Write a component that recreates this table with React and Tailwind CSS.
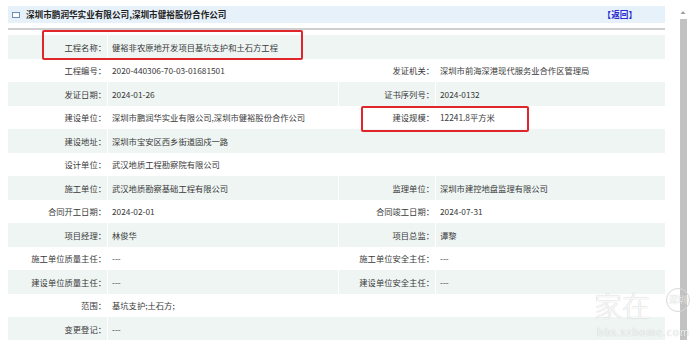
import React from 'react';

const rows = [
    ['工程名称', '健裕非农原地开发项目基坑支护和土石方工程'],
    ['工程编号', '2020-440306-70-03-01681501', '发证机关', '深圳市前海深港现代服务业合作区管理局'],
    ['发证日期', '2024-01-26', '证书序列号', '2024-0132'],
    ['建设单位', '深圳市鹏润华实业有限公司,深圳市健裕股份合作公司', '建设规模', '12241.8平方米'],
    ['建设地址', '深圳市宝安区西乡街道固戍一路'],
    ['设计单位', '武汉地质工程勘察院有限公司'],
    ['施工单位', '武汉地质勘察基础工程有限公司', '监理单位', '深圳市建控地盘监理有限公司'],
    ['合同开工日期', '2024-02-01', '合同竣工日期', '2024-07-31'],
    ['项目经理', '林俊华', '项目总监', '谭黎'],
    ['施工单位质量主任', '---', '施工单位安全主任', '---'],
    ['建设单位质量主任', '---', '建设单位安全主任', '---'],
    ['范围', '基坑支护;土石方;'],
    ['变更登记', '---'],
];

const App = () => {
    return (
        <div
            className="relative w-[700px] h-[340px] overflow-hidden bg-white text-[#3a3a3a] text-[8.3px]"
            style={{ fontFamily: '"Noto Sans CJK SC", "Noto Sans", sans-serif' }}
        >
            <div className="flex">
                {/* 主体 */}
                <div className="w-[672px] pl-[8px] pr-[7px] pt-[6px]">
                    <div className="h-[17px] bg-[#e6f1fa] flex items-center pl-[4px] pr-[28px]">
                        <span className="w-[8px] h-[6px] border border-[#6a8fb8] bg-white mr-[6px]"></span>
                        <span className="font-bold text-[8.6px] text-[#222]">深圳市鹏润华实业有限公司,深圳市健裕股份合作公司</span>
                        <span className="ml-auto font-bold text-[8.6px] text-[#2a2acf]">【返回】</span>
                    </div>
                    <div className="h-[2px] bg-[#cfcfcf] mt-[5px] mb-[5px]"></div>

                    {/* 表格 */}
                    <div>
                        {rows.map((r, i) => {
                            const bg = i % 2 === 0 ? 'bg-[#eef5f3]' : 'bg-white';
                            const full = r.length === 2;
                            return (
                                <div key={i} className="grid grid-cols-[99px_230px_96px_229px] gap-x-px h-[23.5px]">
                                    <div className={`${bg} flex items-center justify-end pr-[1px]`}>{r[0]}：</div>
                                    <div className={`${bg} flex items-center pl-[4px] ${full ? 'col-span-3' : ''}`}>{r[1]}</div>
                                    {!full && (
                                        <>
                                            <div className={`${bg} flex items-center justify-end pr-[1px]`}>{r[2]}：</div>
                                            <div className={`${bg} flex items-center pl-[4px]`}>{r[3]}</div>
                                        </>
                                    )}
                                </div>
                            );
                        })}
                    </div>
                </div>

                {/* 滚动条 */}
                <div className="w-[10px] ml-[6px] flex flex-col items-center pt-[10px]">
                    <svg width="6" height="5" viewBox="0 0 6 5">
                        <path d="M3 1 L5.5 4 L0.5 4 Z" fill="#a0a0a0" />
                    </svg>
                    <div className="w-[7px] h-[330px] bg-[#c2c2c2] mt-[4px]"></div>
                </div>
            </div>

            {/* 红框标注 */}
            <div className="absolute left-[42px] top-[30px] w-[261px] h-[30px] border-2 border-[#e0262a] rounded-[2px]"></div>
            <div className="absolute left-[361px] top-[106px] w-[168px] h-[26px] border-2 border-[#e0262a] rounded-[2px]"></div>

            {/* 水印 */}
            <div className="absolute right-[10px] top-[286px] w-[100px] h-[54px] pointer-events-none text-white/90 [text-shadow:0_0_1px_rgba(0,0,0,0.3)]">
                <div className="absolute left-[4px] top-[4px] text-[28px] leading-[30px] font-light">家在</div>
                <div className="absolute right-0 top-[2px] w-[24px] h-[24px] rounded-full border border-[#d8d8d8] text-[9px] leading-[22px] text-center">深圳</div>
                <div className="absolute right-0 top-[40px] text-[10px] leading-[12px] tracking-[1px]">bbs.szhome.com</div>
            </div>
        </div>
    );
};

export default App;
